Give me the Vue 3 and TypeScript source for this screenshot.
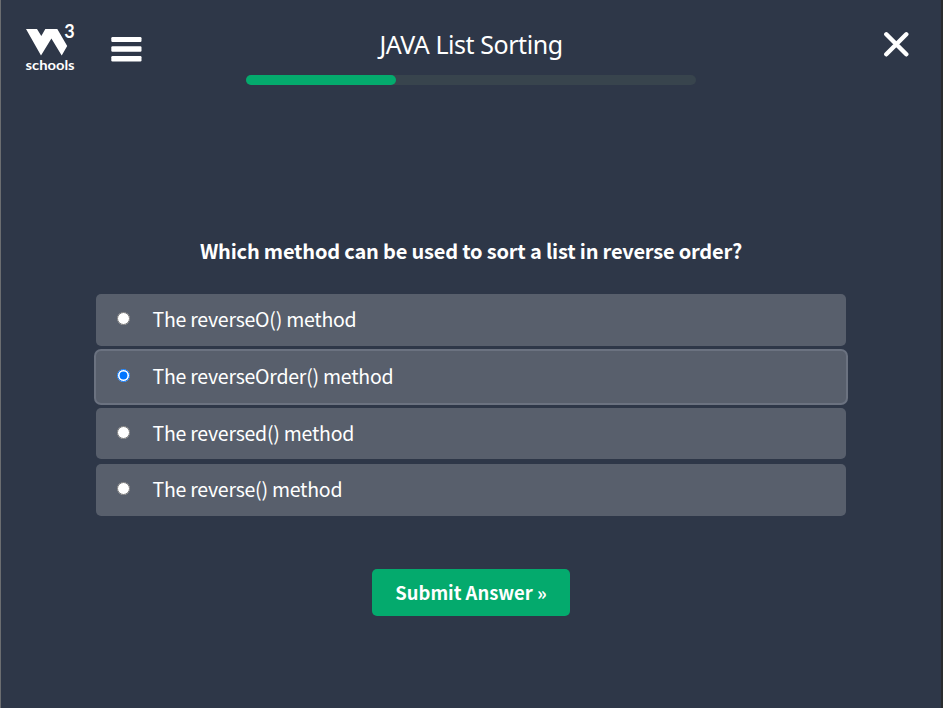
<script setup lang="ts">
import { ref } from 'vue'

interface Answer {
  id: string
  label: string
}

const answers: Answer[] = [
  { id: 'a', label: 'The reverseO() method' },
  { id: 'b', label: 'The reverseOrder() method' },
  { id: 'c', label: 'The reversed() method' },
  { id: 'd', label: 'The reverse() method' },
]
const selected = ref<string>('b')
const progress = ref<number>(33.33)
</script>

<template>
  <div class="page">
    <header class="top">
      <div class="left">
        <a class="logo" aria-label="W3Schools">
          <svg width="52" height="56" viewBox="0 -6 52 56">
            <path d="M1 5H12L16.3 12L20.3 5H32.3L42.2 22L36.7 31.5L26.4 14.6L16 31.5Z" fill="#fff" />
            <text class="three" x="39.2" y="13.6">3</text>
            <text class="word" x="0.6" y="46" textLength="49" lengthAdjust="spacingAndGlyphs">schools</text>
          </svg>
        </a>
        <button class="icon menu" aria-label="Menu">
          <svg width="31" height="26" viewBox="0 0 31 26" fill="#fff">
            <rect x="0.3" y="1" width="30.2" height="5" rx="1.2" />
            <rect x="0.3" y="10.3" width="30.2" height="5.4" rx="1.2" />
            <rect x="0.3" y="20" width="30.2" height="5.4" rx="1.2" />
          </svg>
        </button>
      </div>
      <div class="center">
        <h1 class="title"><span class="title-text">JAVA List Sorting</span></h1>
        <div class="track"><div class="fill" :style="{ width: progress + '%' }"></div></div>
      </div>
      <button class="icon close" aria-label="Close">
        <svg width="26" height="26" viewBox="0 0 26 26">
          <path d="M3.3 3.3L23.3 23.3M23.3 3.3L3.3 23.3" stroke="#fff" stroke-width="4.4" stroke-linecap="round" />
        </svg>
      </button>
    </header>
    <form class="quiz" @submit.prevent>
      <h2 class="question"><span class="question-text">Which method can be used to sort a list in reverse order?</span></h2>
      <div class="answers">
        <label
          v-for="answer in answers"
          :key="answer.id"
          class="answer"
          :class="{ chosen: answer.id === selected }"
        >
          <input v-model="selected" type="radio" name="answer" :value="answer.id" class="radio" />
          <span class="label">{{ answer.label }}</span>
        </label>
      </div>
      <button class="submit" type="submit">Submit Answer »</button>
    </form>
  </div>
</template>

<style>
body {
  margin: 0;
  overflow: hidden;
}
</style>

<style scoped>
.page {
  box-sizing: border-box;
  width: 100vw;
  height: 100vh;
  background: #2e3748;
  border-left: 1px solid #6b6d70;
  border-right: 2px solid #292c2e;
  color: #fff;
  font-family: 'Noto Sans CJK SC', sans-serif;
}
.top {
  display: grid;
  grid-template-columns: 245px 450px 1fr;
  height: 85px;
}
.left {
  display: flex;
}
.logo {
  margin: 18px 0 0 24px;
  width: 50px;
  height: 56px;
}
.three,
.word {
  fill: #fff;
  font-family: Lato, sans-serif;
  font-weight: 700;
}
.three {
  font-size: 18px;
}
.word {
  font-size: 13.5px;
}
.icon {
  padding: 0;
  border: 0;
  background: none;
  line-height: 0;
}
.menu {
  margin: 36px 0 0 36px;
  height: 26px;
}
.title {
  margin: 0;
  height: 75px;
  padding-top: 28px;
  box-sizing: border-box;
  text-align: center;
  font: 400 25px/32px 'Noto Sans', sans-serif;
}
.title-text {
  letter-spacing: -0.45px;
}
.track {
  height: 10px;
  border-radius: 5px;
  background: #38444d;
}
.fill {
  height: 10px;
  border-radius: 5px;
  background: #04aa6d;
}
.close {
  justify-self: end;
  margin: 31px 32px 0 0;
  height: 26px;
}
.quiz {
  display: flex;
  flex-direction: column;
  align-items: center;
  width: 750px;
  margin-left: 95px;
  padding-top: 151px;
}
.question {
  margin: 0;
  height: 58.33px;
  font-size: 20px;
  line-height: 30px;
  font-weight: 700;
  letter-spacing: -0.19px;
  white-space: nowrap;
}
.answers {
  display: flex;
  flex-direction: column;
  gap: 5px;
  width: 100%;
}
.answer {
  display: flex;
  align-items: center;
  height: 51.67px;
  padding-left: 21px;
  box-sizing: border-box;
  border-radius: 5px;
  background: #585f6c;
}
.chosen {
  box-shadow: 0 0 0 2px #6b7280;
}
.radio {
  width: 13px;
  height: 13px;
  margin: 0 22.5px 2.6px 0;
}
.label {
  margin-top: -1.7px;
  font-size: 19.5px;
  line-height: 30px;
  letter-spacing: -0.24px;
  white-space: nowrap;
}
.submit {
  margin-top: 53px;
  width: 198px;
  height: 47px;
  padding: 0;
  border: 0;
  border-radius: 5px;
  background: #04aa6d;
  color: #fff;
  font: 700 18.4px/47px 'Noto Sans CJK SC', sans-serif;
}
</style>
